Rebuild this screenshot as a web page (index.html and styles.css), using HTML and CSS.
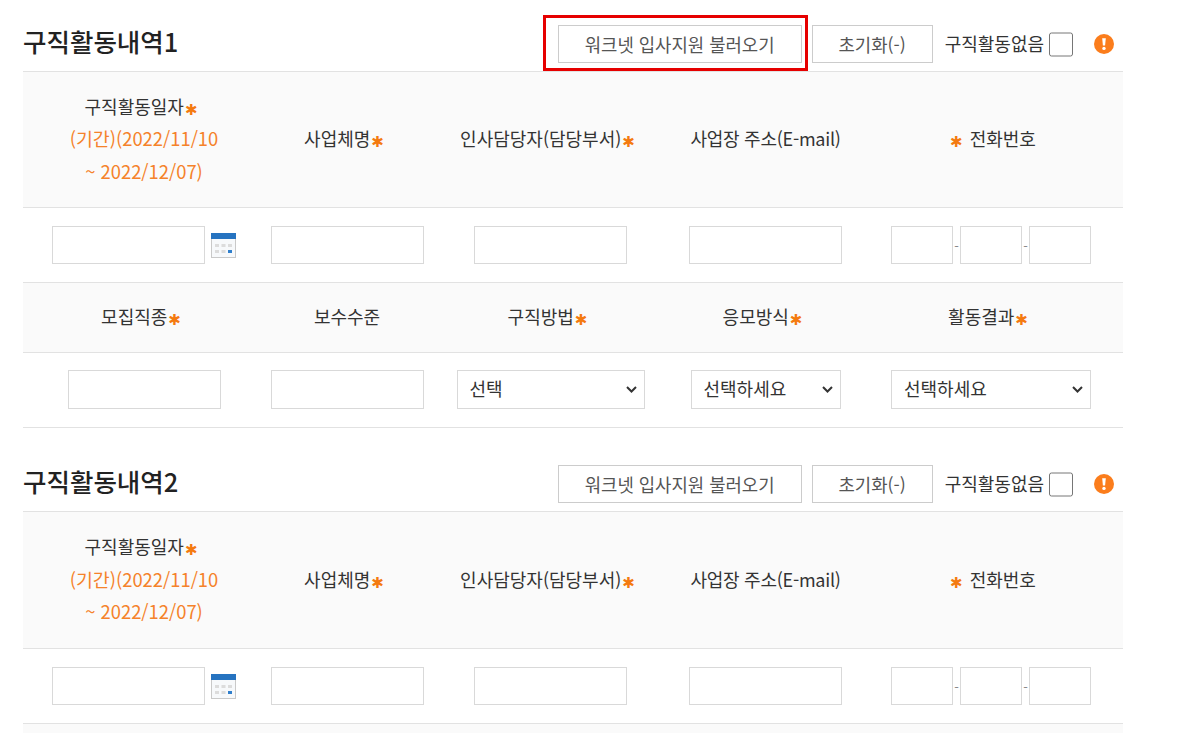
FILE: index.html
```html
<!DOCTYPE html>
<html lang="ko">
<head>
    <meta charset="UTF-8">
    <title>구직활동내역</title>
    <link rel="stylesheet" href="styles.css">
</head>
<body>
    <!-- 구직활동내역 1 -->
    <section class="activity">
        <div class="activity-head">
            <h2>구직활동내역1</h2>
            <div class="head-tools">
                <span class="mark"><button type="button" class="btn btn-load">워크넷 입사지원 불러오기</button></span>
                <button type="button" class="btn btn-reset">초기화(-)</button>
                <label class="none-check">구직활동없음<input type="checkbox"></label>
                <svg class="info-icon" viewBox="0 0 20 20"><circle cx="10" cy="10" r="10" fill="#fb7d1c"/><path d="M8.2 4.2h3.6l-.7 7.4H8.9z" fill="#fff"/><circle cx="10" cy="14.4" r="1.7" fill="#fff"/></svg>
            </div>
        </div>
        <table class="activity-table">
            <tr class="row-date-head">
                <th>구직활동일자<i class="req">✱</i><span class="period">(기간)(2022/11/10<br>~ 2022/12/07)</span></th>
                <th>사업체명<i class="req">✱</i></th>
                <th>인사담당자(담당부서)<i class="req">✱</i></th>
                <th class="addr">사업장 주소(E-mail)</th>
                <th><i class="req req-before">✱</i>전화번호</th>
            </tr>
            <tr>
                <td class="date-cell">
                    <input type="text" class="field">
                    <svg class="cal-icon" viewBox="0 0 25 25"><rect x=".5" y=".5" width="24" height="24" fill="#f7f9fb" stroke="#c9c9c9"/><rect width="25" height="6" fill="#2673c0"/><g fill="#dcdcdc"><rect x="4" y="11" width="4" height="3"/><rect x="10.5" y="11" width="4" height="3"/><rect x="17" y="11" width="4" height="3"/><rect x="4" y="17" width="4" height="3"/><rect x="10.5" y="17" width="4" height="3"/></g><rect x="17" y="17" width="4" height="3" fill="#2f7fcc"/></svg>
                </td>
                <td><input type="text" class="field"></td>
                <td><input type="text" class="field"></td>
                <td><input type="text" class="field"></td>
                <td><div class="tel"><input type="text" class="field"><span>-</span><input type="text" class="field"><span>-</span><input type="text" class="field"></div></td>
            </tr>
            <tr class="row-head">
                <th>모집직종<i class="req">✱</i></th>
                <th>보수수준</th>
                <th>구직방법<i class="req">✱</i></th>
                <th>응모방식<i class="req">✱</i></th>
                <th>활동결과<i class="req">✱</i></th>
            </tr>
            <tr class="row-select">
                <td><input type="text" class="field"></td>
                <td><input type="text" class="field"></td>
                <td><select class="field sel-method"><option>선택</option></select></td>
                <td><select class="field sel-apply"><option>선택하세요</option></select></td>
                <td><select class="field sel-result"><option>선택하세요</option></select></td>
            </tr>
        </table>
    </section>

    <!-- 구직활동내역 2 -->
    <section class="activity">
        <div class="activity-head">
            <h2>구직활동내역2</h2>
            <div class="head-tools">
                <span><button type="button" class="btn btn-load">워크넷 입사지원 불러오기</button></span>
                <button type="button" class="btn btn-reset">초기화(-)</button>
                <label class="none-check">구직활동없음<input type="checkbox"></label>
                <svg class="info-icon" viewBox="0 0 20 20"><circle cx="10" cy="10" r="10" fill="#fb7d1c"/><path d="M8.2 4.2h3.6l-.7 7.4H8.9z" fill="#fff"/><circle cx="10" cy="14.4" r="1.7" fill="#fff"/></svg>
            </div>
        </div>
        <table class="activity-table">
            <tr class="row-date-head">
                <th>구직활동일자<i class="req">✱</i><span class="period">(기간)(2022/11/10<br>~ 2022/12/07)</span></th>
                <th>사업체명<i class="req">✱</i></th>
                <th>인사담당자(담당부서)<i class="req">✱</i></th>
                <th class="addr">사업장 주소(E-mail)</th>
                <th><i class="req req-before">✱</i>전화번호</th>
            </tr>
            <tr>
                <td class="date-cell">
                    <input type="text" class="field">
                    <svg class="cal-icon" viewBox="0 0 25 25"><rect x=".5" y=".5" width="24" height="24" fill="#f7f9fb" stroke="#c9c9c9"/><rect width="25" height="6" fill="#2673c0"/><g fill="#dcdcdc"><rect x="4" y="11" width="4" height="3"/><rect x="10.5" y="11" width="4" height="3"/><rect x="17" y="11" width="4" height="3"/><rect x="4" y="17" width="4" height="3"/><rect x="10.5" y="17" width="4" height="3"/></g><rect x="17" y="17" width="4" height="3" fill="#2f7fcc"/></svg>
                </td>
                <td><input type="text" class="field"></td>
                <td><input type="text" class="field"></td>
                <td><input type="text" class="field"></td>
                <td><div class="tel"><input type="text" class="field"><span>-</span><input type="text" class="field"><span>-</span><input type="text" class="field"></div></td>
            </tr>
            <tr class="row-head"><th colspan="5"></th></tr>
        </table>
    </section>
</body>
</html>
```

FILE: styles.css
```css
html, body { overflow: hidden; height: 100%; }
body {
    margin: 0;
    padding: 0 54px 0 23px;
    background: #fff;
    color: #333;
    font-family: "Noto Sans CJK KR", "Noto Sans", sans-serif;
    font-size: 18px;
}
.activity { margin-bottom: 12px; }
.activity-head {
    display: flex;
    align-items: center;
    justify-content: space-between;
    height: 71px;
    padding: 17px 9px 0 0;
    box-sizing: border-box;
}
.activity-head h2 {
    margin: 0 0 8px;
    font-size: 25.5px;
    font-weight: 500;
    color: #222;
}
.head-tools { display: flex; align-items: center; }
.mark { position: relative; display: flex; }
.mark::after {
    content: "";
    position: absolute;
    left: -15px; right: -6px; top: -10px; bottom: -8px;
    border: 3px solid #e60000;
    pointer-events: none;
}
.btn {
    height: 38px;
    padding: 0;
    background: #fff;
    border: 1px solid #ccc;
    color: #555;
    font: inherit;
    font-size: 17.8px;
}
.btn-load { width: 244px; }
.btn-reset { width: 121px; margin-left: 10px; }
.none-check { display: flex; align-items: center; margin-left: 12px; padding-bottom: 2px; color: #333; }
.none-check input { width: 24px; height: 25px; margin: 2px 0 0 5px; }
.info-icon { width: 20px; height: 20px; margin: 0 0 0 21px; display: block; }

.activity-table {
    width: 100%;
    border-collapse: collapse;
    table-layout: fixed;
    border-top: 1px solid #e2e2e2;
}
.activity-table tr { border-bottom: 1px solid #e2e2e2; }
.activity-table th { box-sizing: border-box; }
.activity-table th:nth-child(1) { width: 242px; }
.activity-table th:nth-child(2) { width: 164px; }
.activity-table th:nth-child(3) { width: 243px; }
.activity-table th:nth-child(4) { width: 187px; }
.activity-table th[colspan] { width: auto; }
.activity-table th {
    background: #fafafa;
    font-weight: 400;
    text-align: center;
    padding: 0 0 2px;
    line-height: 32.5px;
    color: #333;
    white-space: nowrap;
}
.activity-table .addr { letter-spacing: -0.25px; }
.row-date-head { height: 136px; }
.activity + .activity .row-date-head { height: 137px; }
.row-head { height: 70px; }
.activity-table td { height: 74px; padding: 0; text-align: center; vertical-align: middle; }
.period { display: block; color: #f5822a; font-size: 18.4px; }
.req {
    color: #f47a0f;
    font-family: "DejaVu Sans", sans-serif;
    font-style: normal;
    font-weight: 700;
    font-size: 15px;
    line-height: 0;
    margin: 0 6px 0 1px;
    vertical-align: -1px;
}
.req-before { margin: 0 7px 0 4px; }

.field {
    box-sizing: border-box;
    width: 153px;
    height: 38px;
    margin: 0;
    vertical-align: middle;
    background: #fff;
    border: 1px solid #d9d9d9;
    border-radius: 0;
    font: inherit;
    color: #333;
}
.row-select .field { height: 39px; margin-bottom: 2px; }
select.field {
    appearance: none;
    padding: 0 24px 3px 12px;
    background: #fff url("data:image/svg+xml,%3Csvg xmlns='http://www.w3.org/2000/svg' width='11' height='7' viewBox='0 0 11 7'%3E%3Cpath d='M1 1l4.5 4.5L10 1' fill='none' stroke='%23333' stroke-width='2'/%3E%3C/svg%3E") no-repeat right 7px center;
}
.sel-method { width: 188px; }
.sel-apply { width: 150px; }
.sel-result { width: 200px; }
.date-cell { white-space: nowrap; }
.cal-icon { width: 25px; height: 25px; margin-left: 0; vertical-align: middle; }
.tel { display: flex; justify-content: center; align-items: center; color: #888; }
.tel .field { width: 62px; }
.tel span { width: 7px; font-size: 13px; text-align: center; }
```
